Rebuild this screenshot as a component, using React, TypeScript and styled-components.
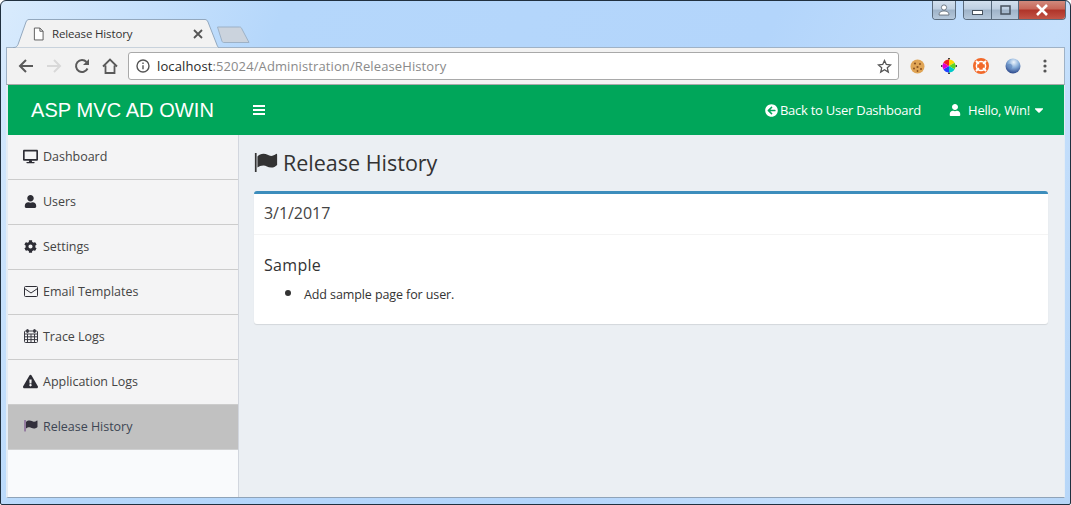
import React from 'react';
import styled, { createGlobalStyle } from 'styled-components';
import {
  FaArrowCircleLeft,
  FaCaretDown,
  FaCog,
  FaDesktop,
  FaExclamationTriangle,
  FaUser,
} from 'react-icons/fa';

const GlobalStyle = createGlobalStyle`
  html, body { margin: 0; padding: 0; background: #fff; }
  * { box-sizing: border-box; }
`;

const bodyFont = `'Open Sans', 'Noto Sans', sans-serif`;

const Frame = styled.div`
  position: relative;
  width: 1071px;
  height: 505px;
  overflow: hidden;
  display: flex;
  flex-direction: column;
  padding: 0 5px 6px 5px;
  border: 1px solid #20303f;
  border-radius: 6px 6px 2px 2px;
  background: linear-gradient(115deg, #d9ebfd 0%, #b5d7fb 22%, #b3d5fb 60%, #c6e0fc 82%, #b6d6f8 100%);
  font-family: ${bodyFont};
`;

const CaptionGroup = styled.div`
  position: absolute;
  top: -1px;
  right: ${p => p.$right}px;
  height: 20px;
  display: flex;
  border: 1px solid #5b6b7c;
  border-top: none;
  border-radius: 0 0 4px 4px;
  overflow: hidden;
`;

const CaptionButton = styled.div`
  width: ${p => p.$w}px;
  display: flex;
  align-items: center;
  justify-content: center;
  border-left: ${p => (p.$first ? 'none' : '1px solid #56697c')};
  background: ${p =>
    p.$close
      ? 'linear-gradient(#d28f82 0%, #c8685a 45%, #b0352a 55%, #c25446 100%)'
      : 'linear-gradient(#d5e2f0 0%, #bfd0e2 45%, #a0b4c9 55%, #b5c7da 100%)'};
`;

const TabStrip = styled.div`
  height: 46px;
  flex: none;
  position: relative;
  display: flex;
  align-items: flex-end;
  padding-left: 7px;
`;

const Tab = styled.div`
  position: relative;
  z-index: 1;
  width: 206px;
  height: 29px;
  margin-bottom: -1px;
  display: flex;
  align-items: center;
  padding: 0 16px 0 20px;
  font-size: 11.5px;
  color: #333;
  letter-spacing: -0.15px;
`;

const TabShape = styled.svg`
  position: absolute;
  left: 0;
  top: 0;
`;

const TabTitle = styled.span`
  position: relative;
  margin-left: 8px;
  flex: 1;
`;

const NewTab = styled.svg`
  margin: 0 0 3px -3px;
`;

const Toolbar = styled.div`
  height: 38px;
  flex: none;
  display: flex;
  align-items: center;
  padding: 0 8px 0 0;
  background: #f2f2f2;
  border: 1px solid #9fb2c6;
  border-bottom-color: #a9a9a9;
`;

const NavIcon = styled.div`
  width: 28px;
  height: 28px;
  flex: none;
  display: flex;
  align-items: center;
  justify-content: center;
`;

const NavIcons = styled.div`
  display: flex;
  padding-left: 5px;
  margin-right: 4px;
`;

const Omnibox = styled.div`
  width: 771px;
  height: 28px;
  flex: none;
  display: flex;
  align-items: center;
  padding: 0 6px 0 7px;
  background: #fff;
  border: 1px solid #a9a9a9;
  border-radius: 3px;
`;

const Url = styled.div`
  flex: 1;
  margin-left: 7px;
  font-size: 13px;
  letter-spacing: 0.11px;
  color: #8a8a8a;
  & b {
    font-weight: 400;
    color: #2a2a2a;
  }
`;

const Extensions = styled.div`
  display: flex;
  align-items: center;
  margin-left: 2px;
`;

const ExtIcon = styled.div`
  width: 32px;
  height: 28px;
  display: flex;
  align-items: center;
  justify-content: center;
`;

const Page = styled.div`
  flex: 1;
  min-height: 0;
  display: flex;
  flex-direction: column;
  margin-left: 0;
  background: #fff;
  border-left: 2px solid #e4ecf4;
  border-right: 1px solid #e4ecf4;
  border-bottom: 1px solid #8fa3b8;
`;

const Navbar = styled.div`
  height: 50px;
  flex: none;
  display: flex;
  align-items: center;
  background: #00a65a;
  color: #fff;
`;

const Brand = styled.div`
  width: 230px;
  padding-left: 23px;
  font-family: 'Liberation Sans', Arial, sans-serif;
  font-size: 20px;
  letter-spacing: 0.07px;
  white-space: nowrap;
`;

const Toggle = styled.div`
  margin-left: 15px;
  width: 12px;
  display: flex;
  flex-direction: column;
  gap: 2px;
  & i {
    display: block;
    height: 2px;
    background: #fff;
  }
`;

const NavLinks = styled.div`
  margin-left: auto;
  display: flex;
  align-items: center;
  gap: 28px;
  padding-right: 18px;
`;

const NavLink = styled.div`
  display: flex;
  align-items: center;
  gap: ${p => p.$gap || 2}px;
  font-size: 13px;
  font-weight: 500;
  letter-spacing: -0.25px;
  white-space: nowrap;
`;

const Body = styled.div`
  flex: 1;
  min-height: 0;
  display: flex;
`;

const Sidebar = styled.nav`
  width: 231px;
  flex: none;
  background: #f9fafc;
  border-right: 1px solid #d2d6de;
`;

const SideItem = styled.div`
  height: 45px;
  display: flex;
  align-items: center;
  padding: 0 0 2px 14px;
  font-size: 12.5px;
  letter-spacing: -0.02px;
  color: ${p => (p.$active ? '#3d4654' : '#444')};
  background: ${p => (p.$active ? '#c1c1c1' : '#f4f4f5')};
  border-bottom: 1px solid ${p => (p.$active ? '#cfd0d1' : '#cccccc')};
`;

const SideIcon = styled.span`
  width: 17px;
  margin-right: 4px;
  display: flex;
  justify-content: center;
  color: #2d2d35;
`;

const Content = styled.main`
  flex: 1;
  min-width: 0;
  padding: 14px 16px 0 15px;
  background: #ebeff3;
`;

const Heading = styled.h1`
  margin: 0 0 15px;
  height: 27px;
  display: flex;
  align-items: center;
  gap: 5px;
  font-size: 21.5px;
  font-weight: 400;
  letter-spacing: 0;
  color: #333;
  font-family: ${bodyFont};
`;

const Card = styled.section`
  background: #fff;
  border-top: 3px solid #3c8dbc;
  border-radius: 3px;
  box-shadow: 0 1px 1px rgba(0, 0, 0, 0.1);
`;

const CardHeader = styled.div`
  height: 41px;
  display: flex;
  align-items: center;
  padding: 0 10px 2px;
  font-size: 16px;
  letter-spacing: -0.05px;
  color: #444;
  border-bottom: 1px solid #f4f4f4;
`;

const CardBody = styled.div`
  height: 89px;
  padding: 20px 10px 0;
  color: #333;
`;

const SectionTitle = styled.h3`
  margin: 0 0 8px;
  font-size: 16px;
  line-height: 20px;
  font-weight: 400;
  letter-spacing: 0.3px;
  font-family: ${bodyFont};
`;

const Notes = styled.ul`
  margin: 0;
  padding: 0 0 0 40px;
  font-size: 12.5px;
  line-height: 20px;
  letter-spacing: -0.1px;
  & li::marker {
    font-size: 17px;
  }
`;

// FontAwesome 4 style flag, the pack only ships the newer square one
const FlagIcon = ({ size, color, pole }: { size: number; color: string; pole?: string }) => (
  <svg width={size} height={size * 0.82} viewBox="0 0 28 23" fill={color}>
    <rect x="1" y="0" width="2" height="23" fill={pole || color} />
    <path d="M4 4c2-2 4-3 7-3 4 0 6 2.500 9 2.500 2 0 4-1 6-2.500.6 0 1 .3 1 1v12c-2 2-4 3-7 3-4 0-6-2.500-9-2.500s-5 1-7 2.500z" />
  </svg>
);

const CalendarIcon = () => (
  <svg width="14" height="14" viewBox="0 0 14 14" fill="none" stroke="#3a3a42" strokeWidth="1">
    <rect x="0.500" y="2" width="13" height="11.500" rx="1" fill="#f4f4f5" />
    <path d="M0.500 5h13M0.500 7.800h13M0.500 10.600h13M3.500 5v8.500M7 5v8.500M10.500 5v8.500" />
    <rect x="2.500" y="0.500" width="2" height="3" rx="1" fill="#3a3a42" />
    <rect x="9.500" y="0.500" width="2" height="3" rx="1" fill="#3a3a42" />
  </svg>
);

const EnvelopeIcon = () => (
  <svg width="14" height="11" viewBox="0 0 14 11" fill="none" stroke="#2d2d35" strokeWidth="1">
    <rect x="0.500" y="0.500" width="13" height="10" rx="1" />
    <path d="M0.500 2.500L7 7l6.500-4.500" />
  </svg>
);

const sideItems = [
  { label: 'Dashboard', icon: <FaDesktop size={15} /> },
  { label: 'Users', icon: <FaUser size={13} /> },
  { label: 'Settings', icon: <FaCog size={13} /> },
  { label: 'Email Templates', icon: <EnvelopeIcon /> },
  { label: 'Trace Logs', icon: <CalendarIcon /> },
  { label: 'Application Logs', icon: <FaExclamationTriangle size={15} /> },
  { label: 'Release History', icon: <FlagIcon size={14} color="#33303c" pole="#6a3a80" />, active: true },
];

export default function App() {
  return (
    <Frame>
      <GlobalStyle />
      <CaptionGroup $right={114}>
        <CaptionButton $w={22} $first>
          <svg width="12" height="12" viewBox="0 0 12 12" fill="#fff" stroke="#5a6470" strokeWidth="0.800">
            <circle cx="6" cy="3.500" r="2.600" />
            <path d="M1 11c0-3 2-4 5-4s5 1 5 4z" />
          </svg>
        </CaptionButton>
      </CaptionGroup>
      <CaptionGroup $right={4}>
        <CaptionButton $w={27} $first>
          <svg width="11" height="5" viewBox="0 0 11 5" fill="#fff" stroke="#47525e" style={{ marginTop: 6 }}>
            <rect x="0.500" y="0.500" width="10" height="4" />
          </svg>
        </CaptionButton>
        <CaptionButton $w={27}>
          <svg width="11" height="10" viewBox="0 0 11 10" fill="none" stroke="#47525e" strokeWidth="1.500">
            <rect x="1" y="1" width="9" height="8" />
          </svg>
        </CaptionButton>
        <CaptionButton $w={47} $close>
          <svg width="14" height="12" viewBox="0 0 14 12" stroke="#fff" strokeWidth="2.600">
            <path d="M2 1l10 10M12 1L2 11" />
          </svg>
        </CaptionButton>
      </CaptionGroup>

      <TabStrip>
        <Tab>
          <TabShape width="206" height="29" viewBox="0 0 206 29">
            <path d="M0 28.500h1c2 0 3-1 4-3L13 3c.7-1.600 1.500-2.500 3-2.500h176c1.500 0 2.300.9 3 2.500l9 23c.5 1.400 1 2.500 2 2.500" fill="#f2f2f2" stroke="#93a8be" />
          </TabShape>
          <svg width="11" height="14" viewBox="0 0 12 14" fill="#fff" stroke="#555" style={{ position: 'relative' }}>
            <path d="M1.500.500h6l3.500 3.500v9.500h-9.500zM7.500.500v3.500h3.500" />
          </svg>
          <TabTitle>Release History</TabTitle>
          <svg width="10" height="10" viewBox="0 0 10 10" stroke="#555" strokeWidth="1.800" style={{ position: 'relative' }}>
            <path d="M1 1l8 8M9 1l-8 8" />
          </svg>
        </Tab>
        <NewTab width="35" height="18" viewBox="0 0 35 18">
          <path d="M1.500 1h22c1 0 1.500.3 2 1.200l7.500 14.300h-25c-1 0-1.500-.3-2-1.200z" fill="#cbd3dd" stroke="#9db1c6" />
        </NewTab>
      </TabStrip>

      <Toolbar>
        <NavIcons>
          <NavIcon>
            <svg width="16" height="14" viewBox="0 0 16 14" fill="none" stroke="#5a5a5a" strokeWidth="2">
              <path d="M15 7H2M8 1L2 7l6 6" />
            </svg>
          </NavIcon>
          <NavIcon>
            <svg width="16" height="14" viewBox="0 0 16 14" fill="none" stroke="#d8d8d8" strokeWidth="2">
              <path d="M1 7h13M8 1l6 6-6 6" />
            </svg>
          </NavIcon>
          <NavIcon>
            <svg width="16" height="16" viewBox="0 0 16 16" fill="none" stroke="#5a5a5a" strokeWidth="2">
              <path d="M13.500 10.500A6 6 0 1 1 12.500 4" />
              <path d="M15 1v6H9z" fill="#5a5a5a" stroke="none" />
            </svg>
          </NavIcon>
          <NavIcon>
            <svg width="16" height="16" viewBox="0 0 16 16" fill="none" stroke="#5a5a5a" strokeWidth="1.800">
              <path d="M1 8.500L8 1.500l7 7M3.500 7.500V15h9V7.500" />
            </svg>
          </NavIcon>
        </NavIcons>
        <Omnibox>
          <svg width="14" height="14" viewBox="0 0 14 14" fill="none" stroke="#555" strokeWidth="1.400">
            <circle cx="7" cy="7" r="6" />
            <path d="M7 6.200v4M7 3.400v1.500" />
          </svg>
          <Url>
            <b>localhost</b>:52024/Administration/ReleaseHistory
          </Url>
          <svg width="15" height="15" viewBox="0 0 15 15" fill="none" stroke="#555" strokeWidth="1.300">
            <path d="M7.500 1.500l1.800 4 4.300.4-3.300 2.900 1 4.300-3.800-2.300-3.800 2.300 1-4.300L1.400 5.900l4.300-.4z" />
          </svg>
        </Omnibox>
        <Extensions>
          <ExtIcon>
            <svg width="15" height="15" viewBox="0 0 15 15">
              <circle cx="7.500" cy="7.500" r="7" fill="#e0a556" />
              <g fill="#8a5220">
                <circle cx="5" cy="4.500" r="1.100" />
                <circle cx="10" cy="5" r="1" />
                <circle cx="7.500" cy="8" r="1.100" />
                <circle cx="4" cy="9.500" r="1" />
                <circle cx="11" cy="10" r="1.100" />
                <circle cx="7.500" cy="12" r="0.900" />
              </g>
            </svg>
          </ExtIcon>
          <ExtIcon>
            <svg width="16" height="16" viewBox="0 0 16 16">
              <path d="M8 0V16M0 8H16" stroke="#444" strokeWidth="2" />
              <circle cx="8" cy="8" r="6.500" fill="#fff" />
              <path d="M8 8V1.500A6.500 6.500 0 0 1 13.600 4.700z" fill="#ffd800" />
              <path d="M8 8l5.600-3.300a6.500 6.500 0 0 1 0 6.600z" fill="#5fd321" />
              <path d="M8 8l5.600 3.300A6.500 6.500 0 0 1 8 14.500z" fill="#00c8c8" />
              <path d="M8 8v6.500a6.500 6.500 0 0 1-5.600-3.200z" fill="#2040ff" />
              <path d="M8 8l-5.600 3.300a6.500 6.500 0 0 1 0-6.600z" fill="#e000d0" />
              <path d="M8 8L2.400 4.700A6.500 6.500 0 0 1 8 1.500z" fill="#f02020" />
            </svg>
          </ExtIcon>
          <ExtIcon>
            <svg width="16" height="16" viewBox="0 0 16 16">
              <circle cx="8" cy="8" r="8" fill="#f2692a" />
              <circle cx="8" cy="8" r="4.600" fill="none" stroke="#fff" strokeWidth="1.500" />
              <path d="M3 3l3 3M13 3l-3 3M3 13l3-3M13 13l-3-3" stroke="#fff" strokeWidth="2" />
              <circle cx="8" cy="8" r="2.800" fill="#f2692a" />
            </svg>
          </ExtIcon>
          <ExtIcon>
            <svg width="16" height="16" viewBox="0 0 16 16">
              <defs>
                <radialGradient id="globe" cx="0.550" cy="0.250" r="0.800">
                  <stop offset="0" stopColor="#eef5fc" />
                  <stop offset="0.450" stopColor="#86add9" />
                  <stop offset="1" stopColor="#1f3a80" />
                </radialGradient>
              </defs>
              <circle cx="8" cy="8" r="7.500" fill="url(#globe)" />
              <path d="M2 7c2-2 4-1 5 0s0 3-1 4-3-1-4-4z" fill="#5f86bd" opacity="0.6" />
            </svg>
          </ExtIcon>
          <ExtIcon>
            <svg width="4" height="14" viewBox="0 0 4 14" fill="#555">
              <circle cx="2" cy="2" r="1.600" />
              <circle cx="2" cy="7" r="1.600" />
              <circle cx="2" cy="12" r="1.600" />
            </svg>
          </ExtIcon>
        </Extensions>
      </Toolbar>

      <Page>
        <Navbar>
          <Brand>ASP MVC AD OWIN</Brand>
          <Toggle>
            <i />
            <i />
            <i />
          </Toggle>
          <NavLinks>
            <NavLink>
              <FaArrowCircleLeft size={13} />
              Back to User Dashboard
            </NavLink>
            <NavLink $gap={7}>
              <FaUser size={12} />
              Hello, Win!
              <FaCaretDown size={14} style={{ marginLeft: -5 }} />
            </NavLink>
          </NavLinks>
        </Navbar>
        <Body>
          <Sidebar>
            {sideItems.map(item => (
              <SideItem key={item.label} $active={item.active}>
                <SideIcon>{item.icon}</SideIcon>
                {item.label}
              </SideItem>
            ))}
          </Sidebar>
          <Content>
            <Heading>
              <FlagIcon size={24} color="#333" />
              Release History
            </Heading>
            <Card>
              <CardHeader>3/1/2017</CardHeader>
              <CardBody>
                <SectionTitle>Sample</SectionTitle>
                <Notes>
                  <li>Add sample page for user.</li>
                </Notes>
              </CardBody>
            </Card>
          </Content>
        </Body>
      </Page>
    </Frame>
  );
}
